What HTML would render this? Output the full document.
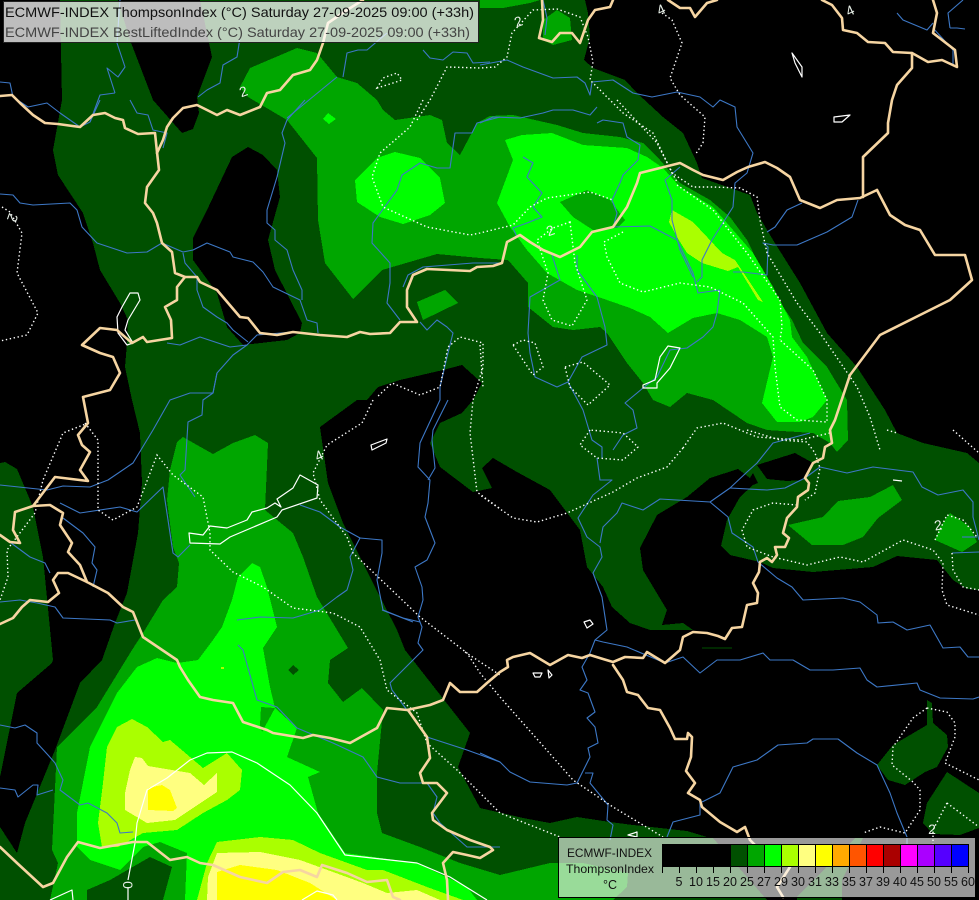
<!DOCTYPE html>
<html><head><meta charset="utf-8"><title>ECMWF-INDEX ThompsonIndex</title>
<style>
html,body{margin:0;padding:0;background:#000;width:979px;height:900px;overflow:hidden}
svg{display:block;position:absolute;left:0;top:0}
.r polyline{fill:none;stroke:#3d78c6;stroke-width:1.1;stroke-linejoin:round}
.t polyline{fill:none;stroke:#f6d5a2;stroke-width:2.6;stroke-linejoin:round;stroke-linecap:round}
.d polyline,.d polygon{fill:none;stroke:#fff;stroke-width:1.4;stroke-dasharray:1.4 2.6}
.w polygon,.w polyline{fill:none;stroke:#fff;stroke-width:1.2;stroke-linejoin:round}
.l text{font:14px "Liberation Sans",sans-serif;fill:#e8f0e8;text-anchor:middle}
text{font-family:"Liberation Sans",sans-serif}
</style></head><body>
<svg width="979" height="900" viewBox="0 0 979 900" xmlns="http://www.w3.org/2000/svg">
<g shape-rendering="crispEdges">
<rect width="979" height="900" fill="#005000"/>
<g fill="#000">
<polygon points="0,0 60,0 62,100 53,150 58,175 83,213 93,243 100,270 120,303 128,320 127,343 125,367 132,400 140,433 142,483 138,533 127,593 115,623 102,660 80,683 55,750 25,823 17,853 0,827 0,777 17,693 52,663 53,660 43,557 33,507 17,469 5,462 0,463"/>
<polygon points="118,0 130,40 153,100 182,133 193,129 199,113 197,97 212,57 200,0"/>
<polygon points="248,147 263,155 277,170 280,197 268,240 275,270 302,323 300,333 287,340 243,345 227,327 217,293 193,260 193,238 207,210 232,157"/>
<polygon points="320,427 357,400 367,400 378,387 400,380 443,370 462,365 482,383 473,400 462,413 440,423 430,443 440,467 473,492 492,488 482,468 493,458 517,472 550,490 580,530 587,567 603,587 612,607 630,623 650,630 693,630 683,623 662,625 667,610 643,570 640,548 657,515 687,497 710,478 738,469 750,478 753,473 758,483 753,485 740,497 727,520 721,546 730,555 760,562 773,568 813,572 873,567 897,556 937,560 953,580 967,589 979,590 979,793 947,772 927,803 923,823 933,834 960,835 979,828 979,900 842,900 842,880 863,838 855,838 797,897 797,900 767,900 713,838 707,837 687,831 633,825 610,822 577,817 550,823 523,818 480,808 458,767 470,733 405,650 397,630 373,583 343,523 328,483"/>
<polygon points="757,465 795,453 813,463 803,480 787,481 767,479"/>
<polygon points="585,0 588,13 590,37 584,60 593,68 625,80 637,93 663,117 683,133 697,163 702,178 750,195 757,213 773,240 800,283 827,333 857,367 885,410 897,433 923,443 967,453 979,463 979,0"/>
</g>
<polygon fill="#005000" points="927,700 932,703 933,723 947,735 948,747 937,767 925,772 905,785 888,780 877,765 893,745 927,725"/>
<g fill="#00a600">
<polygon points="240,87 250,68 297,48 317,53 337,77 357,83 377,100 383,110 395,120 430,115 442,120 447,143 460,155 477,123 490,116 513,115 557,125 583,133 620,137 643,143 660,160 680,183 710,200 730,217 747,240 770,287 792,320 803,343 827,367 847,400 848,440 837,452 830,443 813,433 767,430 747,423 713,400 687,393 670,407 653,400 643,383 627,363 607,333 600,327 573,330 553,327 528,307 528,283 508,260 480,258 437,254 382,270 353,299 325,263 318,220 317,158 287,120 248,97"/>
<polygon points="417,302 445,290 458,303 423,320"/>
<polygon points="557,10 570,18 572,40 553,45 543,40 543,20"/>
<polygon points="480,0 540,0 530,3 503,8 480,8"/>
<polygon points="183,437 197,445 213,454 233,443 255,435 268,443 265,510 293,533 303,557 317,597 348,648 330,660 328,683 343,702 362,688 383,710 377,773 377,813 382,833 420,847 460,863 500,875 550,863 583,863 628,873 627,887 613,900 50,900 58,863 52,850 57,747 97,707 132,650 143,633 163,600 177,587 179,563 173,547 167,500 170,470 177,442"/>
<polygon points="788,525 823,517 838,501 870,497 893,485 902,500 878,518 863,537 843,545 812,545"/>
<polygon points="950,513 970,527 977,542 962,552 935,540 940,527"/>
</g>
<polygon fill="#005000" points="87,890 110,880 150,857 172,867 163,900 87,900"/>
<g fill="#00ff00">
<polygon points="77,847 77,813 90,747 117,693 137,667 157,658 177,663 198,660 213,640 222,627 232,600 238,577 252,563 260,567 267,587 277,627 263,648 270,687 275,708 297,728 287,757 320,772 308,777 318,813 345,853 417,863 467,887 477,900 185,900 187,853 160,842 143,847 120,870 90,860"/>
<polygon points="355,180 377,158 395,152 420,158 440,178 445,203 430,215 403,224 380,217 357,202"/>
<polygon points="328,113 336,119 329,124 323,119"/>
<polygon points="505,140 522,135 552,133 583,145 627,148 647,157 663,168 680,187 713,207 733,230 753,253 773,287 790,320 792,337 807,357 827,400 813,417 800,422 777,422 762,403 773,357 767,337 740,320 717,313 693,318 668,333 650,317 630,308 607,300 577,290 547,273 527,250 510,227 497,203 513,160"/>
</g>
<g fill="#00a600">
<polygon points="560,202 587,190 610,200 625,220 617,228 593,230 573,217"/>
<polygon points="261,707 275,708 262,732 260,725"/>
</g>
<polygon fill="#005000" points="293,665 299,670 293,675 288,670"/>
<g fill="#aaff00">
<polygon points="672,210 693,222 722,253 735,260 763,302 758,300 738,267 728,271 702,263 687,253 677,237 669,222"/>
<polygon points="107,747 117,727 132,719 147,727 163,742 170,740 203,768 227,753 242,770 240,790 227,800 203,813 177,830 143,833 118,847 102,847 98,823 103,783"/>
<polygon points="217,842 260,837 293,840 320,853 367,870 383,870 427,887 463,900 197,900 207,863"/>
</g>
<g fill="#ffff80">
<polygon points="135,757 142,758 148,766 190,773 204,785 217,773 217,792 175,820 147,823 125,810 125,793 130,770"/>
<polygon points="217,853 260,852 300,860 333,872 363,883 387,893 417,890 440,900 207,900 208,877"/>
</g>
<g fill="#ffff00">
<polygon points="162,785 170,790 177,808 173,811 148,810 148,788"/>
<polygon points="217,872 240,865 277,870 310,883 337,900 217,900"/>
</g>
<rect x="221" y="667" width="3" height="2" fill="#aaff00"/>
</g>
<g class="r">
<polyline points="0,82 10,83 13,97 28,107 47,103 60,113 80,127 90,122 100,100"/>
<polyline points="115,93 100,95 90,122"/>
<polyline points="115,93 107,68 118,77 125,67 117,43 120,0"/>
<polyline points="130,100 137,113 148,115 153,130 167,133 163,148"/>
<polyline points="0,194 13,195 20,203 33,205 70,203 77,210 82,227 97,243 127,253 147,252 162,243 183,252 193,250 207,243 230,252 233,257 253,262 263,272 273,287 300,300 307,320 317,323 318,333"/>
<polyline points="183,253 185,263 197,277 197,290 203,307 217,317 227,323 233,330 248,342"/>
<polyline points="167,343 180,345 200,337 230,347 247,345 257,335 293,332"/>
<polyline points="247,345 233,355 217,373 213,393 190,393 170,400 153,430 133,463 108,480 90,487 63,486 47,490 0,485"/>
<polyline points="217,373 213,393 203,400 202,415 188,422 185,470 180,475 195,497"/>
<polyline points="60,503 80,513 120,507 137,512 163,487 173,553 178,557 190,545"/>
<polyline points="63,518 83,533 95,547 92,563 97,570 93,587"/>
<polyline points="0,602 20,600 37,603 55,607 63,618 110,620 117,623 135,620"/>
<polyline points="7,540 30,557 45,563 50,573"/>
<polyline points="0,725 15,728 25,725 37,733 37,743 48,755 55,763 63,780 60,790 80,805 88,803 107,813 117,823 120,833 133,832"/>
<polyline points="0,788 15,790 18,797 33,785 38,785 37,795 53,790"/>
<polyline points="237,620 260,617 293,618 320,610 337,597 347,590 353,570 350,557 360,538 340,527 320,512 300,505"/>
<polyline points="238,645 243,650 257,700 277,707 297,728 333,743 363,757 377,777 400,783 427,783 437,797 433,813 440,823 467,847 500,847"/>
<polyline points="360,538 382,540 382,553 377,580 383,610 403,618 420,622"/>
<polyline points="305,100 287,120 282,133 285,143 277,177 267,210 267,223 275,230 275,240 287,250 293,270 302,290 302,300"/>
<polyline points="500,117 477,123 472,133 455,133 450,168 437,168 420,163 402,175 397,190 373,223 372,243 390,263 390,283 387,303 400,320"/>
<polyline points="403,287 408,275 423,267 473,263 500,263"/>
<polyline points="420,322 427,330 437,320 447,327 453,333 447,357 440,387 440,400 420,443 418,467 430,480 428,503 425,517 435,543 427,560 415,567 422,587 423,600 418,617 422,627 418,643 423,650 390,683 392,690 407,710 417,723 427,737 467,750 500,762"/>
<polyline points="448,400 433,430 432,440 435,468 428,480"/>
<polyline points="382,610 413,622"/>
<polyline points="480,123 493,117 520,118 543,113 553,110 573,110 590,115 597,107"/>
<polyline points="597,123 603,120 623,123 627,137 640,145 638,160 623,175 620,183 612,200 617,213 613,228"/>
<polyline points="523,157 533,163 527,177 542,193 533,207 542,217 527,223 513,228 517,237"/>
<polyline points="613,227 650,226 677,240 693,273 698,293 720,290 717,313 713,327 703,337 687,348 670,350 657,377 643,388 625,403 633,410 637,428 623,435 613,450"/>
<polyline points="480,65 507,60 523,67 553,78 577,77 585,83 590,95 592,82 613,80 633,93 652,97 677,92 700,97 713,107 720,100 735,107 737,127 753,153 747,173 735,183 733,207 712,240 702,260 702,277 697,282"/>
<polyline points="733,272 743,272 767,275 768,247 763,243 773,245 797,245 827,232 852,217 858,200"/>
<polyline points="767,232 775,227 787,210 802,203"/>
<polyline points="680,167 665,180 672,200 672,220 680,250 693,277"/>
<polyline points="552,255 560,280 530,297 528,333 530,353 535,377 557,387 568,382 583,410 592,440 602,447 602,458"/>
<polyline points="577,255 577,270 597,297 605,327 607,345 582,357 568,382"/>
<polyline points="597,458 600,480 612,480 593,495 578,518 587,537 600,547 602,557 593,573 602,597 607,630 595,640 590,653 582,667 587,680 580,690 588,693 595,712 587,718 595,727 598,743 588,748 590,757 577,783 567,785 530,782 510,772 500,762 480,753"/>
<polyline points="600,543 603,527 617,513 622,503 643,510 660,499 710,502 730,488 747,472 757,463 773,443 810,433"/>
<polyline points="730,488 767,490 785,488 805,478 820,467 847,473 873,467 913,472 922,487 938,495 963,490 973,502 973,517 979,540"/>
<polyline points="962,537 977,537"/>
<polyline points="952,553 979,552"/>
<polyline points="710,502 728,517 732,533 753,547 758,562 777,578 792,587 803,600 843,598 860,602 877,615 878,623 893,622 907,630 930,625 943,648 960,647 968,657 979,657"/>
<polyline points="595,640 603,642 627,647 665,663 683,657 700,673 717,660 740,660 763,653 770,660 793,660 810,670 833,670 860,668 867,680 877,687 917,683 920,690 940,698 973,699 979,697"/>
<polyline points="585,773 593,773 590,783 608,805 607,820 613,825 610,840"/>
<polyline points="702,802 720,793 733,767 757,760 778,745 807,743 813,739 838,739 857,753 877,765 890,793 897,813 907,837 907,850"/>
<polyline points="700,803 700,815 673,822 667,837"/>
<polyline points="897,13 903,20 927,30 933,23"/>
<polyline points="950,28 948,13 963,0"/>
<polyline points="950,28 957,28 965,29"/>
<polyline points="933,28 953,50 953,65"/>
<polyline points="423,50 430,58 443,60 453,52 467,53 473,63 490,62"/>
<polyline points="343,77 347,53 358,50 367,50 387,33"/>
<polyline points="240,38 237,57 223,65 220,83 207,90 198,97"/>
<polyline points="337,77 287,118"/>
<polyline points="543,0 547,18 545,35"/>
</g>
<g class="d">
<polyline points="2,207 10,212 22,233 17,273 38,313 27,335 0,341"/>
<polyline points="88,423 63,433 43,480 35,513 7,550 8,577 0,600"/>
<polyline points="85,423 98,440 98,510 113,520 137,507 157,455 173,475 203,497 210,533 210,550 233,572 263,587 293,608 333,613 360,627 380,660 387,690 417,713 427,743 457,770 500,813 560,837"/>
<polyline points="465,652 500,675"/>
<polyline points="373,400 362,423 327,445 313,473 320,500 347,537 353,553 420,617 467,653 480,673 500,697 573,780 613,807 663,837"/>
<polygon points="377,88 383,78 397,73 402,80 390,84"/>
<polyline points="417,120 430,100 447,67 480,68 495,67 507,57 512,33 533,10 557,9 580,17 588,37 593,62 590,80 623,113 653,133 672,173 693,187 713,187 740,188 757,197 760,220 767,253 797,303 820,333 857,387 870,417 880,450"/>
<polyline points="423,100 410,127 380,153 372,177 383,207 427,227 470,235 480,233 513,225 530,207 547,198 590,192 613,200"/>
<polygon points="570,222 553,228 537,240 548,273 543,300 552,320 572,326 587,300 575,263"/>
<polyline points="623,232 604,242 607,257 620,283 643,292 680,283 710,287 743,303 773,337 775,367 780,407 797,420 827,422 827,400 813,370 780,340"/>
<polyline points="677,185 713,210 747,253 780,300 782,327 780,340"/>
<polyline points="617,100 657,143 677,182"/>
<polyline points="662,13 672,20 682,43 670,78 680,95 705,117 703,143 695,155"/>
<polygon points="513,345 523,340 535,343 543,367 533,375"/>
<polygon points="565,367 583,362 610,385 588,405 570,387"/>
<polyline points="480,345 483,387"/>
<polygon points="590,430 580,445 597,458 623,460 638,447 623,433"/>
<polyline points="683,448 667,467 637,478 613,492 567,513 537,522 513,518 480,495"/>
<polyline points="499,508 477,492 470,433 473,400 483,367 483,343 460,337 448,347 440,387 420,395 392,383 377,397"/>
<polyline points="683,448 697,428 723,423 757,437 800,440 830,433"/>
<polyline points="747,430 780,440 807,442 815,453 820,468 815,493 805,500"/>
<polyline points="797,505 773,503 753,510 742,530 747,547 773,557 807,565 840,557 863,562 903,540 933,550 943,563 942,590 947,605 979,615"/>
<polyline points="935,540 947,515 963,520 977,537"/>
<polyline points="953,430 979,453"/>
<polyline points="887,430 897,433"/>
<polyline points="952,553 953,570 963,587 979,590"/>
<polyline points="927,708 947,712 955,723 955,737 945,763 973,777 979,780"/>
<polyline points="927,708 913,718 893,747 892,765 913,782 920,790 920,810 905,833 880,827 863,833"/>
<polyline points="947,803 933,830 933,860"/>
<polyline points="947,803 979,827"/>
</g>
<g class="w">
<polyline points="128,900 128,887"/>
<polyline points="128,880 135,843 137,823 147,790 167,778 190,760 207,753 232,752 257,763 290,785 317,813 345,855 417,863 450,877 487,900"/>
<polyline points="50,900 72,890 73,900"/>
<polyline points="302,900 317,891 333,895 337,900"/>
<polygon points="189,533 203,535 210,526 227,528 247,520 252,512 267,508 275,503 281,507 277,499 293,488 300,475 318,485 317,498 282,510 277,517 230,537 220,544 190,543"/>
<polygon points="371,445 387,439 386,443 372,450"/>
<polygon points="130,293 138,293 140,300 128,320 125,330 133,343 127,345 118,333 117,317 122,307"/>
<polygon points="668,346 680,348 670,368 657,383 657,388 643,388 643,385 655,380 660,357"/>
<polygon points="792,53 802,67 802,77 795,63"/>
<polygon points="834,117 850,115 842,122 834,122"/>
<polygon points="584,622 590,620 593,624 587,628"/>
<polygon points="533,673 542,673 540,677 535,677"/>
<polygon points="548,670 552,675 549,678"/>
<polygon points="628,835 637,832 637,837"/>
<polyline points="893,480 902,481"/>
</g>
<line x1="702" y1="648" x2="732" y2="648" stroke="#005000" stroke-width="1"/>
<g class="t">
<polyline points="0,96 12,95 20,103 33,115 45,123 58,124 80,127 93,115 105,113 115,118 123,120 125,128 138,134 155,133 157,152 159,170 147,187 145,203 153,213 157,223 162,243 172,252 175,273 185,277 197,277 200,282 217,290 240,317 248,318 260,333 277,335 293,332 320,335 347,337 360,332 370,334 390,333 400,322 417,322 407,307 407,290 413,275 427,269 470,271 477,267 493,266 502,263 507,242 520,235 530,242 543,250 560,257 580,247 592,232 613,227 627,207 637,183 640,173 680,163 693,170 703,175 723,180 737,172 748,167 765,162 777,168 790,177 800,200 820,208 837,200 860,198 877,190"/>
<polyline points="863,197 863,157 888,133 888,123 892,100 897,85 912,68 912,53 928,62 942,60 957,67 955,50 933,33 937,13 933,0"/>
<polyline points="912,53 893,52 885,43 868,42 857,33 843,30 842,18 832,5 822,0"/>
<polyline points="877,190 890,215 905,225 920,230 935,255 965,255 972,280 950,300 920,315 880,335 850,375 835,420 830,430 832,443 825,447 823,458 813,463 805,478 809,483 808,490 798,497 797,507 787,518 783,533 789,538 785,547 775,547 777,555 772,562 767,558 760,562 759,572 753,583 758,593 757,603 747,605 742,627 732,628 725,639 718,636 707,633 693,632 683,637 680,650 665,663 647,652 643,658 625,657 613,662 603,659 590,655 582,658 568,655 550,665 530,653 513,657 507,660 508,667 500,672 487,683 477,692 460,692 450,683 443,700 430,705 407,710 387,708 377,728 350,743 330,738 313,735 303,738 273,733 267,730 243,722 233,703 213,700 200,697 188,680 180,667 177,660 143,637 133,612 123,607 108,593 87,582 80,565 68,552 72,543 60,525 63,513 50,505 33,506 55,477 88,481 80,470 90,452 82,445 78,435 88,423 83,397 110,390 120,373 113,357 100,353 82,345 100,328 117,330 132,343 143,337 147,342 172,338 171,320 165,307 177,300 177,287 185,277"/>
<polyline points="33,506 15,512 13,530 20,543 10,542 0,535"/>
<polyline points="87,582 68,573 58,573 53,580 59,593 48,602 30,600 22,607 13,618 0,624"/>
<polyline points="0,847 17,863 43,887 53,883 67,857 78,842 100,848 133,842 147,842 170,860 187,857 200,863 213,865 240,877 267,883 283,872 300,870 317,877 322,865 347,873 367,882 387,880 393,897 400,900"/>
<polyline points="448,900 447,880 443,863 453,852 467,855 480,858 493,850 490,847 470,840 447,830 433,820 432,813 447,793 437,783 423,783 420,773 430,758 427,737 408,710"/>
<polyline points="613,665 623,680 627,692 638,695 648,708 660,710 670,728 675,739 687,739 688,733 692,737 691,757 686,771 695,783 688,793 700,800 702,807 720,822 737,832 745,827 750,840 757,847 790,867 777,887 783,897"/>
<polyline points="613,0 610,7 595,10 588,20 580,43 572,33 560,33 552,42 539,38 543,20 542,0"/>
<polyline points="668,0 680,8 690,8 695,17 707,3 717,0"/>
<polyline points="363,0 347,10 328,23 323,43 317,60 310,70 293,75 280,90 267,93 260,107 240,115 227,110 217,115 197,105 183,108 173,118 167,127 163,140 157,153"/>
</g>
<g class="l">
<text transform="translate(245,96) rotate(-20)">2</text>
<text transform="translate(520,26) rotate(-20)">2</text>
<text transform="translate(552,235) rotate(-20)">2</text>
<text transform="translate(8,216) rotate(110)">2</text>
<text transform="translate(321,460) rotate(-25)">4</text>
<text transform="translate(663,14) rotate(-25)">4</text>
<text transform="translate(852,15) rotate(-25)">4</text>
<text transform="translate(939,530) rotate(-10)">2</text>
<text transform="translate(932,834) rotate(0)">2</text>
<text transform="translate(123,885) rotate(90)">0</text>
</g>
<rect x="3.5" y="1.5" width="475" height="41" fill="#fff" fill-opacity=".74" stroke="#222" stroke-width="1"/>
<text x="5" y="17" font-size="14" fill="#111" textLength="469" lengthAdjust="spacingAndGlyphs">ECMWF-INDEX ThompsonIndex (°C) Saturday 27-09-2025 09:00 (+33h)</text>
<text x="5" y="37" font-size="14" fill="#444" textLength="465" lengthAdjust="spacingAndGlyphs">ECMWF-INDEX BestLiftedIndex (°C) Saturday 27-09-2025 09:00 (+33h)</text>
<rect x="558.5" y="837.5" width="417" height="60" fill="#fff" fill-opacity=".6" stroke="#000" stroke-width="1"/>
<g font-size="12" fill="#111">
<text x="567" y="857" textLength="85" lengthAdjust="spacingAndGlyphs">ECMWF-INDEX</text>
<text x="566" y="873" textLength="88" lengthAdjust="spacingAndGlyphs">ThompsonIndex</text>
<text x="610" y="889" text-anchor="middle" font-size="12.5">°C</text>
</g>
<g shape-rendering="crispEdges">
<rect x="662" y="844" width="306" height="23" fill="#000"/>
<rect x="730" y="844" width="17" height="23" fill="#005000"/>
<rect x="747" y="844" width="17" height="23" fill="#00a600"/>
<rect x="764" y="844" width="17" height="23" fill="#00ff00"/>
<rect x="781" y="844" width="17" height="23" fill="#aaff00"/>
<rect x="798" y="844" width="17" height="23" fill="#ffff80"/>
<rect x="815" y="844" width="17" height="23" fill="#ffff00"/>
<rect x="832" y="844" width="17" height="23" fill="#ffaa00"/>
<rect x="849" y="844" width="17" height="23" fill="#ff5500"/>
<rect x="866" y="844" width="17" height="23" fill="#ff0000"/>
<rect x="883" y="844" width="17" height="23" fill="#aa0000"/>
<rect x="900" y="844" width="17" height="23" fill="#ff00ff"/>
<rect x="917" y="844" width="17" height="23" fill="#aa00ff"/>
<rect x="934" y="844" width="17" height="23" fill="#5500ff"/>
<rect x="951" y="844" width="17" height="23" fill="#0000ff"/>
<path d="M662.5 844V873M679.5 844V873M696.5 844V873M713.5 844V873M730.5 844V873M747.5 844V873M764.5 844V873M781.5 844V873M798.5 844V873M815.5 844V873M832.5 844V873M849.5 844V873M866.5 844V873M883.5 844V873M900.5 844V873M917.5 844V873M934.5 844V873M951.5 844V873M968.5 844V873" stroke="#000" stroke-width="1" fill="none"/>
<rect x="662.5" y="844.5" width="306" height="22" fill="none" stroke="#000"/>
</g>
<g font-size="12.5" fill="#111" text-anchor="middle">
<text x="679" y="886">5</text><text x="696" y="886">10</text><text x="713" y="886">15</text><text x="730" y="886">20</text><text x="747" y="886">25</text><text x="764" y="886">27</text><text x="781" y="886">29</text><text x="798" y="886">30</text><text x="815" y="886">31</text><text x="832" y="886">33</text><text x="849" y="886">35</text><text x="866" y="886">37</text><text x="883" y="886">39</text><text x="900" y="886">40</text><text x="917" y="886">45</text><text x="934" y="886">50</text><text x="951" y="886">55</text><text x="968" y="886">60</text>
</g>
</svg>
</body></html>
